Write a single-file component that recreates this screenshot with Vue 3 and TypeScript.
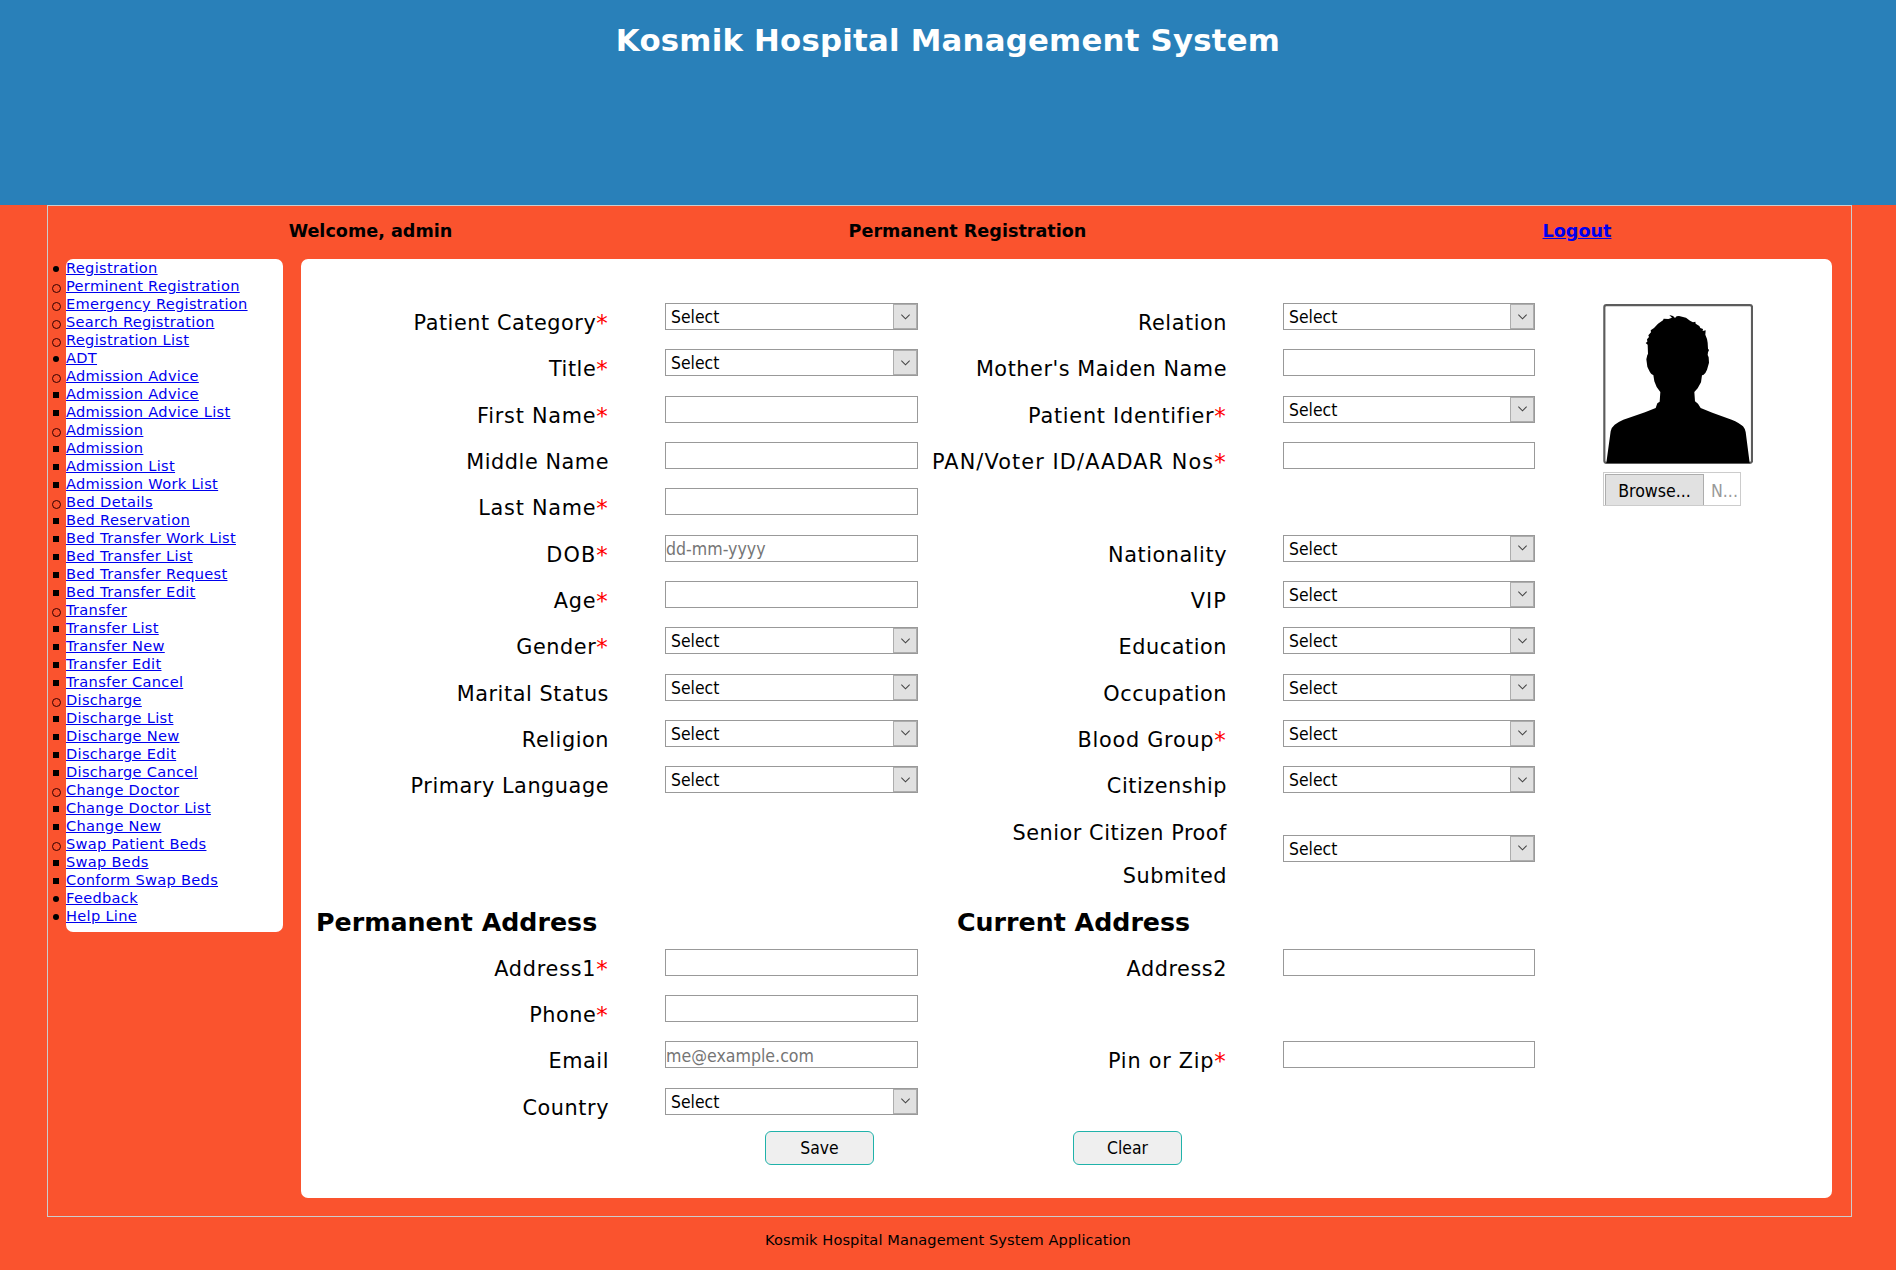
<script setup lang="ts">
type Field = { label: string; kind: 'select' | 'text'; required?: boolean; placeholder?: string; tall?: boolean } | null
type Level = 'disc' | 'circle' | 'square'

const menu: [Level, string][] = [
  ['disc', 'Registration'],
  ['circle', 'Perminent Registration'],
  ['circle', 'Emergency Registration'],
  ['circle', 'Search Registration'],
  ['circle', 'Registration List'],
  ['disc', 'ADT'],
  ['circle', 'Admission Advice'],
  ['square', 'Admission Advice'],
  ['square', 'Admission Advice List'],
  ['circle', 'Admission'],
  ['square', 'Admission'],
  ['square', 'Admission List'],
  ['square', 'Admission Work List'],
  ['circle', 'Bed Details'],
  ['square', 'Bed Reservation'],
  ['square', 'Bed Transfer Work List'],
  ['square', 'Bed Transfer List'],
  ['square', 'Bed Transfer Request'],
  ['square', 'Bed Transfer Edit'],
  ['circle', 'Transfer'],
  ['square', 'Transfer List'],
  ['square', 'Transfer New'],
  ['square', 'Transfer Edit'],
  ['square', 'Transfer Cancel'],
  ['circle', 'Discharge'],
  ['square', 'Discharge List'],
  ['square', 'Discharge New'],
  ['square', 'Discharge Edit'],
  ['square', 'Discharge Cancel'],
  ['circle', 'Change Doctor'],
  ['square', 'Change Doctor List'],
  ['square', 'Change New'],
  ['circle', 'Swap Patient Beds'],
  ['square', 'Swap Beds'],
  ['square', 'Conform Swap Beds'],
  ['disc', 'Feedback'],
  ['disc', 'Help Line'],
]

const sel = (label: string, required = false): Field => ({ label, kind: 'select', required })
const txt = (label: string, required = false, placeholder = ''): Field => ({ label, kind: 'text', required, placeholder })

const personal: [Field, Field][] = [
  [sel('Patient Category', true), sel('Relation')],
  [sel('Title', true), txt("Mother's Maiden Name")],
  [txt('First Name', true), sel('Patient Identifier', true)],
  [txt('Middle Name'), txt('PAN/Voter ID/AADAR Nos', true)],
  [txt('Last Name', true), null],
  [txt('DOB', true, 'dd-mm-yyyy'), sel('Nationality')],
  [txt('Age', true), sel('VIP')],
  [sel('Gender', true), sel('Education')],
  [sel('Marital Status'), sel('Occupation')],
  [sel('Religion'), sel('Blood Group', true)],
  [sel('Primary Language'), sel('Citizenship')],
  [null, { label: 'Senior Citizen Proof Submited', kind: 'select', tall: true }],
]

const address: [Field, Field][] = [
  [txt('Address1', true), txt('Address2')],
  [txt('Phone', true), null],
  [txt('Email', false, 'me@example.com'), txt('Pin or Zip', true)],
  [sel('Country'), null],
]
const groups = [personal, address]

const wide = ['First Name', 'Last Name', 'Blood Group', 'Pin or Zip', 'Address1', 'Age', 'Patient Identifier']
const wider = ['PAN/Voter ID/AADAR Nos', 'DOB', 'VIP']
</script>

<template>
  <div class="page">
    <header class="banner"><h1>Kosmik Hospital Management System</h1></header>
    <div class="shell">
      <div class="topbar">
        <span class="welcome">Welcome, admin</span>
        <span class="title">Permanent Registration</span>
        <span class="logout"><a href="#">Logout</a></span>
      </div>
      <div class="columns">
        <ul class="menu">
          <li v-for="([level, name], i) in menu" :key="i" :class="level"><a href="#">{{ name }}</a></li>
        </ul>
        <main class="card">
          <form class="form" @submit.prevent>
            <template v-for="(rows, g) in groups" :key="g">
              <div v-if="g === 1" class="headings">
                <h2>Permanent Address</h2>
                <h2>Current Address</h2>
              </div>
              <div v-for="(row, r) in rows" :key="r" class="row" :class="{ tall: row[1]?.tall }">
                <template v-for="(f, c) in row" :key="c">
                  <label class="label" :class="{ wide: f && wide.includes(f.label), wider: f && wider.includes(f.label) }"><template v-if="f">{{ f.label }}<span v-if="f.required" class="req">*</span></template></label>
                  <div class="cell">
                    <div v-if="f?.kind === 'select'" class="select">
                      <span>Select</span>
                      <i class="drop"><svg width="9" height="6" viewBox="0 0 9 6"><path d="M.3 .6 4.5 4.8 8.7 .6" fill="none" stroke="#444" stroke-width="1.1" /></svg></i>
                    </div>
                    <input v-else-if="f" type="text" :placeholder="f.placeholder" />
                  </div>
                </template>
              </div>
            </template>
            <div class="actions">
              <button type="button">Save</button>
              <button type="button">Clear</button>
            </div>
          </form>
          <aside class="photo">
            <svg width="150" height="160" viewBox="69 43 450 480">
              <rect x="73" y="46.5" width="443" height="473" rx="6" fill="#fff" stroke="#5c5c5c" stroke-width="6.5" />
              <path d="M79 520 92 425Q94 413 104 405Q112 398 130 390L195 368L227 355L232 341L239 336L241 307L230 292L223 275L220 256Q212 254 207 242L202 231L199 209L202 196L204 193L203 165L197 160L202 156L201 149L207 142L205 137L213 128L212 122L222 115L234 102L249 92L251 87L265 88L276 84L268 76L279 79L285 85L290 80L297 79L309 82L318 84L330 93L339 98L346 96L347 102L358 109L361 115L369 118L368 124L377 122L376 135L381 148L383 159L384 177L387 181L384 188L383 196L386 203L387 219L381 240Q377 251 370 256L366 257L363 278L353 296L343 307L345 335L354 342L362 355L397 369L455 390Q478 399 489 410Q495 417 497 427L509 520Z" fill="#000" />
            </svg>
            <div class="file"><span class="browse">Browse...</span><span class="none">N...</span></div>
          </aside>
        </main>
      </div>
    </div>
    <footer>Kosmik Hospital Management System Application</footer>
  </div>
</template>

<style>
body { background: #fa532e; }
</style>

<style scoped>
* { box-sizing: border-box; }
.page {
  height: 1270px;
  overflow: hidden;
  background: #fa532e;
  color: #000;
  font-family: Verdana, "DejaVu Sans", sans-serif;
}
.banner { height: 205px; background: #2980b9; }
h1 {
  margin: 0;
  padding-top: 19px;
  text-align: center;
  color: #fff;
  font-size: 30.8px;
  letter-spacing: 0.22px;
  line-height: 42px;
}
.shell {
  width: 1805px;
  height: 1012px;
  margin-left: 47px;
  border: 1px solid #ccc;
}
.topbar { display: flex; height: 53px; padding-top: 13px; font-size: 17.6px; line-height: 24px; font-weight: bold; }
.topbar span { flex: none; text-align: center; }
.welcome { width: 645px; }
.title { width: 549px; }
.logout { width: 609px; padding-left: 61px; }
a { color: #00e; text-decoration: underline; }
.columns { display: flex; align-items: flex-start; gap: 18px; padding-left: 18px; }
.menu {
  width: 217px;
  height: 673px;
  margin: 0;
  padding: 0;
  border-radius: 7px;
  background: #fff;
  list-style: none;
  font-size: 14.6px;
  letter-spacing: 0.3px;
}
.menu li { position: relative; height: 18px; line-height: 18px; white-space: nowrap; }
.menu li::before { content: ""; position: absolute; left: -13px; top: 7px; width: 6px; height: 6px; background: #000; }
.menu .disc::before { border-radius: 50%; }
.menu .circle::before { left: -14px; width: 7px; height: 7px; border: 1px solid #300; border-radius: 50%; background: none; }
.card {
  display: flex;
  width: 1531px;
  height: 939px;
  padding-top: 35px;
  border-radius: 7px;
  background: #fff;
}
.form { width: 1302px; }
.row { display: grid; grid-template-columns: 308px 56px 253px 309px 56px 252px; height: 46.333px; }
.row.tall { height: 89.333px; }
.label { text-align: right; font-size: 20.8px; letter-spacing: 0.55px; line-height: 43px; padding-top: 8px; white-space: nowrap; }
.label.wide { letter-spacing: 0.75px; }
.label.wider { letter-spacing: 1.12px; }
.label:nth-of-type(2) { grid-column: 4; }
.tall .label { white-space: normal; padding-left: 60px; }
.cell { grid-column: 3; padding-top: 9px; }
.cell:nth-of-type(2) { grid-column: 6; }
.tall .cell { padding-top: 31px; }
.req { color: #f00; font-size: 23px; line-height: 0; vertical-align: -1px; letter-spacing: 1.2px; }
.select, input {
  display: flex;
  width: 100%;
  height: 27px;
  border: 1px solid #999;
  background: #fff;
  font-family: Tahoma, "DejaVu Sans Condensed", "DejaVu Sans", sans-serif;
  font-size: 17.4px;
}
input { padding: 2px 0 0; outline: none; border-radius: 0; font-size: 17.6px; }
input::placeholder { color: #757575; opacity: 1; }
.select { justify-content: space-between; padding-left: 5px; line-height: 27px; }
.drop { display: flex; align-items: center; justify-content: center; width: 24px; height: 25px; background: #e1e1e1; border: 1px solid #adadad; }
.headings { display: flex; height: 46.667px; }
h2 { margin: 0; padding-left: 15px; width: 641px; font-size: 25.3px; line-height: 60px; }
.actions { display: flex; gap: 199px; padding: 6px 0 0 464px; }
button {
  width: 109px;
  height: 34px;
  padding: 1px 0 0;
  border: 1px solid #20b2aa;
  border-radius: 6px;
  background: #efefef;
  font-family: Tahoma, "DejaVu Sans Condensed", "DejaVu Sans", sans-serif;
  font-size: 17.4px;
  color: #000;
}
.photo { padding-top: 10px; }
.photo svg { display: block; }
.file { display: flex; width: 138px; height: 34px; margin-top: 8px; padding: 1px 0 0 1px; border: 1px solid #ccc; font-family: Tahoma, "DejaVu Sans Condensed", "DejaVu Sans", sans-serif; font-size: 17.6px; line-height: 32px; }
.browse { width: 99px; height: 31px; text-align: center; background: #e1e1e1; border: 1px solid #adadad; border-bottom: 0; }
.none { padding-left: 7px; padding-top: 1px; color: #999; }
footer { text-align: center; font-size: 14.6px; letter-spacing: 0.08px; line-height: 18px; padding-top: 14px; }
</style>
